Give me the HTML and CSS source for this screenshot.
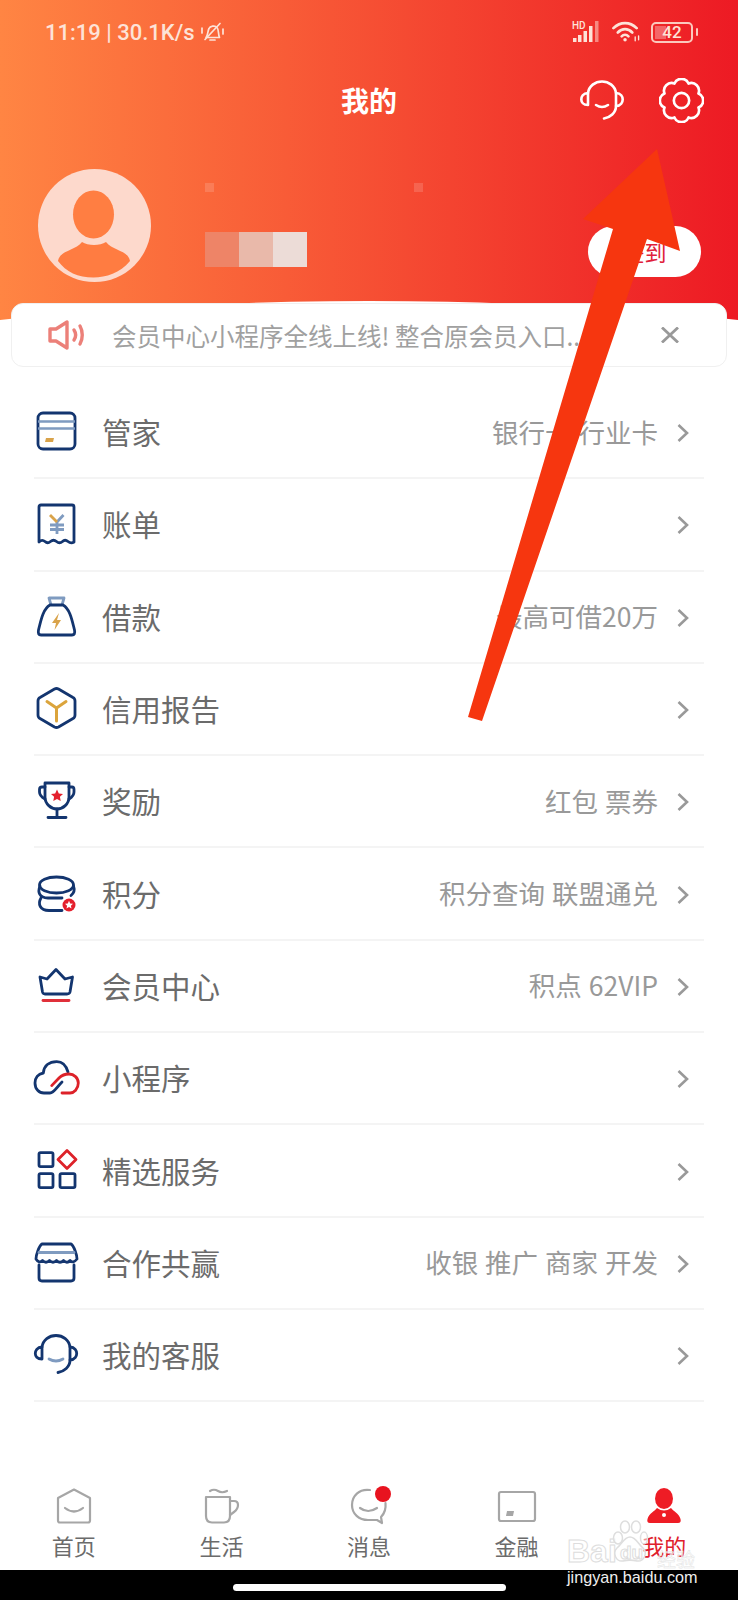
FILE: index.html
```html
<!DOCTYPE html>
<html>
<head>
  <title>我的</title>
  <link rel="stylesheet" href="styles.css">
</head>
<body>
  <div class="header">
    <div class="status-bar">
      <span class="status-text">11:19 | 30.1K/s</span>
      <svg class="bell" width="25" height="20" viewBox="0 0 24 20" fill="none" stroke="currentColor" stroke-width="1.700" stroke-linecap="round" stroke-linejoin="round">
        <path d="M5.500 15.500c2-2 1.500-6 3-9 1-2.500 6-3.500 8-1 2 2 1 7 2.500 10z"/>
        <path d="M9.500 18h5"/>
        <path d="M4.500 17.500 19.500 1.500"/>
        <path d="M1.500 6v5M22.500 7v5"/>
      </svg>
      <div class="status-right">
        <svg width="30" height="22" viewBox="0 0 30 22">
          <text x="0" y="8" class="hd-text">HD</text>
          <rect x="1" y="17" width="3.500" height="4" fill="currentColor"/>
          <rect x="6" y="14" width="3.500" height="7" fill="currentColor"/>
          <rect x="11.500" y="10" width="3.500" height="11" fill="currentColor"/>
          <rect x="17" y="5" width="3.500" height="16" fill="currentColor"/>
          <rect x="23" y="0" width="3.500" height="21" fill="currentColor" opacity="0.5"/>
        </svg>
        <svg width="29" height="22" viewBox="0 0 30 22" fill="none" stroke="currentColor" stroke-width="2.800" stroke-linecap="round">
          <path d="M1.500 7c7-7 17-7 24 0"/>
          <path d="M6 11.500c4.500-4.500 10.500-4.500 15 0"/>
          <path d="M10 15.500c2-2 5-2 7 0"/>
          <circle cx="13.500" cy="19" r="1.800" fill="currentColor" stroke="none"/>
          <path d="M24 16v4M27.500 15v4" stroke-width="1.400"/>
        </svg>
        <div class="battery">
          <div class="battery-body"><span class="battery-fill"></span><span class="battery-num">42</span></div>
          <span class="battery-tip"></span>
        </div>
      </div>
    </div>

    <div class="title-row">
      <div></div>
      <h1>我的</h1>
      <div class="title-icons">
        <svg width="44" height="40" viewBox="0 0 44 40" fill="none" stroke="#fff" stroke-width="2.600" stroke-linecap="round" stroke-linejoin="round">
          <path d="M8 13C9 6 15 1.500 22 1.500S35 6 36 13V26C36 33 30 37.500 24 38.500"/>
          <path d="M8 13C3 13 1.300 17 1.300 19.500S3 25 8 25z"/>
          <path d="M36 13C41 13 42.700 17 42.700 19.500S41 26 36 26"/>
          <path d="M16 25Q22 29 28 25"/>
        </svg>
        <svg width="45" height="45" viewBox="0 0 44 44" fill="none" stroke="#fff" stroke-width="2.600" stroke-linejoin="round">
          <path d="M15.100 5.400A7.500 7.500 0 0 1 28.900 5.400A7.500 7.500 0 0 1 38.600 15.100A7.500 7.500 0 0 1 38.600 28.900A7.500 7.500 0 0 1 28.900 38.600A7.500 7.500 0 0 1 15.100 38.600A7.500 7.500 0 0 1 5.400 28.900A7.500 7.500 0 0 1 5.400 15.100A7.500 7.500 0 0 1 15.100 5.400Z"/>
          <circle cx="22" cy="22" r="7.500"/>
        </svg>
      </div>
    </div>

    <div class="profile">
      <svg class="avatar" width="113" height="113" viewBox="0 0 113 113">
        <circle cx="56.500" cy="56.500" r="56.500" fill="#fdd9cc"/>
        <ellipse cx="55.500" cy="45.500" rx="20.500" ry="24" fill="#ff7e42"/>
        <path d="M20 92C22 81 37 82 44 73C50 77 62 77 68 73C75 82 90 81 92 92C82 104 68 108.500 55.500 108.500C40 108.500 28 103 20 92Z" fill="#ff7c41"/>
      </svg>
      <div class="user-info">
        <div class="name-blur"><span></span><span></span></div>
        <div class="id-blur"><span></span><span></span><span></span></div>
      </div>
      <div class="sign-btn">签到</div>
    </div>
  </div>

  <div class="notice">
    <svg width="38" height="30" viewBox="0 0 38 30" fill="none" stroke="#ec8079" stroke-width="3.400" stroke-linejoin="round" stroke-linecap="round">
      <path d="M2 9H8L19 2V28L8 21H2z"/>
      <path d="M26 10c2 3 2 7 0 10"/>
      <path d="M32 6c3 5 3 13 0 18"/>
    </svg>
    <div class="notice-text">会员中心小程序全线上线! 整合原会员入口...</div>
    <svg class="notice-close" width="18" height="16" viewBox="0 0 18 16" fill="none" stroke="#999" stroke-width="2.800">
      <path d="M1 0.500 17 15.500M17 0.500 1 15.500"/>
    </svg>
  </div>

  <div class="menu">
    <div class="menu-row">
      <svg class="menu-icon" viewBox="0 0 44 44" fill="none" stroke="#13356f" stroke-width="2.800">
        <rect x="4" y="4" width="37" height="36" rx="5"/>
        <path d="M4 12.500H41M4 19.500H41" stroke="#7f9bc0" stroke-width="2.500"/>
        <path d="M12 29H20L19 33H11z" fill="#d9a34a" stroke="none"/>
      </svg>
      <span class="menu-title">管家</span>
      <span class="menu-info">银行卡 行业卡</span>
      <svg class="chevron" width="12" height="18" viewBox="0 0 12 18"><path d="M1.500 1 10 9 1.500 17"/></svg>
    </div>
    <div class="menu-row">
      <svg class="menu-icon" viewBox="0 0 44 44" fill="none" stroke="#13356f" stroke-width="2.800" stroke-linejoin="round">
        <path d="M5 41V6Q5 4 7 4H38Q40 4 40 6V41Q37 43 34 40.500Q31 38 28.500 40.500Q25.500 43 22.500 40.500Q19.500 38 16.500 40.500Q13.500 43 11 40.500Q8 38 5 41Z"/>
        <path d="M29.500 14 23 21V33M16 24H30M16 28.500H30" stroke="#7f9bc0"/>
        <path d="M16 14 23 21" stroke="#d9a34a"/>
      </svg>
      <span class="menu-title">账单</span>
      <svg class="chevron" width="12" height="18" viewBox="0 0 12 18"><path d="M1.500 1 10 9 1.500 17"/></svg>
    </div>
    <div class="menu-row">
      <svg class="menu-icon" viewBox="0 0 44 44" fill="none" stroke="#13356f" stroke-width="2.800" stroke-linejoin="round">
        <path d="M17 11 15 4H30L28 11" stroke="#7f9bc0"/>
        <path d="M16 11H29C36 15 38 26 40.500 36Q41.500 41 38 41H7Q3.500 41 4.500 36C7 26 9 15 16 11Z"/>
        <path d="M25 19 18 29H22L20.500 36 27 26H23z" fill="#d9a34a" stroke="none"/>
      </svg>
      <span class="menu-title">借款</span>
      <span class="menu-info">最高可借20万</span>
      <svg class="chevron" width="12" height="18" viewBox="0 0 12 18"><path d="M1.500 1 10 9 1.500 17"/></svg>
    </div>
    <div class="menu-row">
      <svg class="menu-icon" viewBox="0 0 44 44" fill="none" stroke="#13356f" stroke-width="2.800" stroke-linejoin="round">
        <path d="M20.500 3Q22.500 2 24.500 3L39 11.500Q41 12.500 41 15V29Q41 31.500 39 32.500L24.500 41Q22.500 42 20.500 41L6 32.500Q4 31.500 4 29V15Q4 12.500 6 11.500Z"/>
        <path d="M13 15.500 22.500 22 32 15.500M22.500 22V35" stroke="#dba43c" stroke-linecap="round" stroke-width="3"/>
      </svg>
      <span class="menu-title">信用报告</span>
      <svg class="chevron" width="12" height="18" viewBox="0 0 12 18"><path d="M1.500 1 10 9 1.500 17"/></svg>
    </div>
    <div class="menu-row">
      <svg class="menu-icon" viewBox="0 0 44 44" fill="none" stroke="#13356f" stroke-width="2.800" stroke-linejoin="round" stroke-linecap="round">
        <path d="M11 5H35V19C35 26 29 31 23 31S11 26 11 19Z"/>
        <path d="M11 9H8Q5.500 9 5.500 11.500V14Q5.500 18 11 21M35 9H38Q40 9 40 11.500V14Q40 18 35 21"/>
        <path d="M23 31V39M14 39.500H32"/>
        <path d="M23 11.500 24.800 15.500 29 16 25.900 18.800 26.700 23 23 20.900 19.300 23 20.100 18.800 17 16 21.200 15.500Z" fill="#e4202d" stroke="none"/>
      </svg>
      <span class="menu-title">奖励</span>
      <span class="menu-info">红包 票券</span>
      <svg class="chevron" width="12" height="18" viewBox="0 0 12 18"><path d="M1.500 1 10 9 1.500 17"/></svg>
    </div>
    <div class="menu-row">
      <svg class="menu-icon" viewBox="0 0 44 44" fill="none" stroke="#13356f" stroke-width="2.800" stroke-linecap="round">
        <ellipse cx="22.500" cy="14" rx="17" ry="8"/>
        <path d="M6 15C3.500 21 5 26.500 14 27H28"/>
        <path d="M39.500 15C41 19 40 22 37 24.500"/>
        <path d="M7 27C3.500 33 6 39.500 15 39.500H28"/>
        <circle cx="35" cy="34" r="6.500" fill="#e4202d" stroke="none"/>
        <path d="M35 29.800 36.200 32.500 39 32.800 36.900 34.700 37.500 37.500 35 36 32.500 37.500 33.100 34.700 31 32.800 33.800 32.500Z" fill="#fff" stroke="none"/>
      </svg>
      <span class="menu-title">积分</span>
      <span class="menu-info">积分查询 联盟通兑</span>
      <svg class="chevron" width="12" height="18" viewBox="0 0 12 18"><path d="M1.500 1 10 9 1.500 17"/></svg>
    </div>
    <div class="menu-row">
      <svg class="menu-icon" viewBox="0 0 44 44" fill="none" stroke="#13356f" stroke-width="2.800" stroke-linejoin="round" stroke-linecap="round">
        <path d="M6 14 13 16 22 6.500 31 16 38.500 14 36 29Q35.500 31 33 31H11Q9 31 8.500 29Z"/>
        <path d="M9 37.500H35" stroke="#e0303a"/>
      </svg>
      <span class="menu-title">会员中心</span>
      <span class="menu-info">积点 62VIP</span>
      <svg class="chevron" width="12" height="18" viewBox="0 0 12 18"><path d="M1.500 1 10 9 1.500 17"/></svg>
    </div>
    <div class="menu-row">
      <svg class="menu-icon" viewBox="0 0 44 44" fill="none" stroke="#13356f" stroke-width="2.800" stroke-linecap="round" stroke-linejoin="round">
        <path d="M34 17C32 10 28 6.600 22.700 6.600C15 6.600 10 11 9.300 18C4 19 1 23 1 28C1 34 5 38 10 38H16C20 38 22 33 28 27"/>
        <path d="M17.700 30.600 25 23C28 20 31 19 35 19C40 19 44.300 23 44.300 28C44.300 34 40 38 36 38H28" stroke="#dd2229"/>
      </svg>
      <span class="menu-title">小程序</span>
      <svg class="chevron" width="12" height="18" viewBox="0 0 12 18"><path d="M1.500 1 10 9 1.500 17"/></svg>
    </div>
    <div class="menu-row">
      <svg class="menu-icon" viewBox="0 0 44 44" fill="none" stroke="#13356f" stroke-width="2.800" stroke-linejoin="round">
        <rect x="5" y="4.600" width="14" height="14" rx="1.500"/>
        <rect x="5" y="25.600" width="14" height="14" rx="1.500"/>
        <rect x="26" y="25.600" width="15" height="14" rx="1.500"/>
        <path d="M33 2.500 42 11.500 33 20.500 24 11.500Z" stroke="#dd2229"/>
      </svg>
      <span class="menu-title">精选服务</span>
      <svg class="chevron" width="12" height="18" viewBox="0 0 12 18"><path d="M1.500 1 10 9 1.500 17"/></svg>
    </div>
    <div class="menu-row">
      <svg class="menu-icon" viewBox="0 0 44 44" fill="none" stroke="#13356f" stroke-width="2.800" stroke-linejoin="round" stroke-linecap="round">
        <path d="M8 4H37C40 6 43 15 43 19Q39 24 36 20.500Q33 24 29.500 20.500Q26 24 22.500 20.500Q19 24 15.500 20.500Q12 24 8.500 20.500Q5 24 2 19C2 15 5 6 8 4Z"/>
        <path d="M5 12.500H40" stroke="#7f9bc0"/>
        <path d="M5 25V38Q5 41 8 41H37Q40 41 40 38V25"/>
      </svg>
      <span class="menu-title">合作共赢</span>
      <span class="menu-info">收银 推广 商家 开发</span>
      <svg class="chevron" width="12" height="18" viewBox="0 0 12 18"><path d="M1.500 1 10 9 1.500 17"/></svg>
    </div>
    <div class="menu-row">
      <svg class="menu-icon" viewBox="0 0 44 44" fill="none" stroke="#13356f" stroke-width="2.800" stroke-linecap="round" stroke-linejoin="round">
        <path d="M8 15C9 8 15 3.500 22 3.500S35 8 36 15V28C36 35 30 39.500 24 40.500"/>
        <path d="M8 15C3 15 1.300 19 1.300 21.500S3 27 8 27z"/>
        <path d="M36 15C41 15 42.700 19 42.700 21.500S41 28 36 28"/>
        <path d="M15 27Q22 31 29 27" stroke="#7f9bc0"/>
      </svg>
      <span class="menu-title">我的客服</span>
      <svg class="chevron" width="12" height="18" viewBox="0 0 12 18"><path d="M1.500 1 10 9 1.500 17"/></svg>
    </div>
  </div>

  <div class="tab-bar">
    <div class="tab">
      <svg width="38" height="36" viewBox="0 0 38 36" fill="none" stroke="#a6a6a6" stroke-width="2.200" stroke-linejoin="round" stroke-linecap="round">
        <path d="M3 10 19 1.500 35 10V32.500Q35 34.500 33 34.500H5Q3 34.500 3 32.500Z"/>
        <path d="M10 20Q19 27 28 20"/>
      </svg>
      <span>首页</span>
    </div>
    <div class="tab">
      <svg width="38" height="36" viewBox="0 0 38 36" fill="none" stroke="#a6a6a6" stroke-width="2.200" stroke-linejoin="round" stroke-linecap="round">
        <path d="M4 9H28V28Q28 34.500 22 34.500H10Q4 34.500 4 28Z"/>
        <path d="M28 13H32Q36 13 36 17T32 24L28 27"/>
        <path d="M8 3Q12 0.500 16 3T25 3"/>
      </svg>
      <span>生活</span>
    </div>
    <div class="tab">
      <svg width="38" height="36" viewBox="0 0 38 36" fill="none" stroke="#a6a6a6" stroke-width="2.200" stroke-linejoin="round" stroke-linecap="round">
        <path d="M20 2C9 0.500 2 8 2 17S9 32 18 32H27L32 35 31 29C35 25 36 20 35.500 15"/>
        <path d="M10 20Q18 26 27 20"/>
        <circle cx="33" cy="6" r="8" fill="#e8131f" stroke="none"/>
      </svg>
      <span>消息</span>
    </div>
    <div class="tab">
      <svg width="38" height="36" viewBox="0 0 38 36" fill="none" stroke="#a6a6a6" stroke-width="2.200" stroke-linejoin="round">
        <rect x="1" y="4" width="36" height="29" rx="2"/>
        <path d="M9 23H16L15 28H8Z" fill="#a6a6a6" stroke="none"/>
      </svg>
      <span>金融</span>
    </div>
    <div class="tab tab-active">
      <svg width="38" height="36" viewBox="0 0 38 36">
        <ellipse cx="19" cy="10.500" rx="9" ry="10.500" fill="#ee1c25"/>
        <path d="M12 20C10 23 4 25 2.500 31Q1.500 35 5 35H33Q36.500 35 35.500 31C34 25 28 23 26 20Q19 25 12 20Z" fill="#ee1c25"/>
        <circle cx="19" cy="27" r="2" fill="#fff"/>
      </svg>
      <span>我的</span>
    </div>
  </div>

  <div class="home-bar"><span></span></div>

  <div class="watermark">
    <div class="wm-logo">
      <span class="wm-bai">Bai</span>
      <svg class="wm-paw" width="38" height="46" viewBox="0 0 38 46" fill="rgba(255,255,255,0.5)" stroke="#dedede" stroke-width="1.500">
        <ellipse cx="7" cy="18" rx="4.500" ry="6"/>
        <ellipse cx="14" cy="7" rx="4.500" ry="6"/>
        <ellipse cx="25" cy="7" rx="4.500" ry="6"/>
        <ellipse cx="33" cy="18" rx="3.500" ry="6"/>
        <path d="M19 17C25 17 27 24 32 28C37 33 33 42 26 41C22 40 16 40 12 41C5 42 1 33 6 28C11 24 13 17 19 17Z"/>
      </svg>
      <span class="wm-du">du</span>
      <span class="wm-jy">经验</span>
    </div>
    <div class="wm-url">jingyan.baidu.com</div>
  </div>

  <svg class="arrow" width="738" height="1600" viewBox="0 0 738 1600">
    <polygon points="657,149 680,251 647,239 482,721 468,717 613,229 583,219" fill="#f6360f"/>
  </svg>
</body>
</html>
```

FILE: styles.css
```css
body {
  position: relative;
  width: 738px;
  height: 1600px;
  margin: 0;
  overflow: hidden;
  display: flex;
  flex-direction: column;
  background-color: #ffffff;
  font-family: "Noto Sans CJK SC", "Noto Sans", sans-serif;
}

/* header */
.header {
  position: relative;
  height: 322px;
  flex-shrink: 0;
  overflow: hidden;
  background: linear-gradient(90deg, #ff8543, #ed1a24);
  color: #ffffff;
}

.header::after {
  content: "";
  position: absolute;
  left: -431px;
  top: 301px;
  width: 1600px;
  height: 336px;
  border-radius: 50%;
  background-color: #ffffff;
}

.status-bar {
  display: flex;
  align-items: center;
  height: 24px;
  padding: 20px 40px 0 45px;
  color: #fde3d8;
}

.status-text {
  font-family: Roboto, sans-serif;
  font-size: 22px;
  font-weight: 500;
}

.bell {
  margin-left: 5px;
}

.status-right {
  display: flex;
  align-items: center;
  gap: 10px;
  margin-left: auto;
}

.hd-text {
  font-family: Roboto, sans-serif;
  font-size: 10px;
  font-weight: 500;
  fill: currentColor;
}

.battery {
  display: flex;
  align-items: center;
  gap: 3px;
}

.battery-body {
  position: relative;
  width: 42px;
  height: 21px;
  box-sizing: border-box;
  display: flex;
  align-items: center;
  justify-content: center;
  border: 2px solid #fbc9bd;
  border-radius: 5px;
}

.battery-fill {
  position: absolute;
  left: 2px;
  top: 2px;
  bottom: 2px;
  width: 11px;
  background-color: rgba(255, 255, 255, 0.3);
}

.battery-num {
  position: relative;
  font-family: Roboto, sans-serif;
  font-size: 17px;
  font-weight: 500;
  line-height: 17px;
}

.battery-tip {
  width: 2px;
  height: 8px;
  border-radius: 1px;
  background-color: #fbc9bd;
}

.title-row {
  display: grid;
  grid-template-columns: 1fr auto 1fr;
  align-items: center;
  height: 46px;
  margin-top: 33px;
  padding-right: 34px;
  padding-left: 34px;
}

h1 {
  margin: 0;
  font-size: 28px;
  font-weight: 700;
  line-height: 46px;
}

.title-icons {
  display: flex;
  align-items: center;
  justify-content: flex-end;
  gap: 35px;
}

.profile {
  display: flex;
  height: 113px;
  margin-top: 46px;
  padding: 0 37px 0 38px;
}

.user-info {
  display: flex;
  flex-direction: column;
  gap: 40px;
  margin-top: 14px;
  margin-left: 54px;
}

.name-blur {
  display: flex;
  justify-content: space-between;
  width: 218px;
  height: 9px;
}

.name-blur span {
  width: 9px;
  background-color: rgba(255, 255, 255, 0.15);
}

.id-blur {
  display: flex;
  width: 102px;
  height: 35px;
}

.id-blur span {
  flex: 1;
  background-color: #ee8467;
}

.id-blur span:nth-child(2) {
  background-color: #e9b9aa;
}

.id-blur span:nth-child(3) {
  background-color: #ecdcd7;
}

.sign-btn {
  width: 113px;
  height: 51px;
  margin-top: 57px;
  margin-left: auto;
  border-radius: 26px;
  background-color: #ffffff;
  color: #e0203a;
  font-size: 22px;
  line-height: 51px;
  text-align: center;
}

/* notice */
.notice {
  position: relative;
  display: flex;
  align-items: center;
  gap: 26px;
  height: 64px;
  box-sizing: border-box;
  flex-shrink: 0;
  margin: -19px 11px 0;
  padding: 0 47px 0 36px;
  background-color: #ffffff;
  border: 1px solid #f0f0f0;
  border-radius: 12px;
}

.notice-text {
  flex: 1;
  overflow: hidden;
  color: #a0a0a0;
  font-size: 24.5px;
  white-space: nowrap;
}

.notice-close {
  flex-shrink: 0;
}

/* menu */
.menu {
  margin: 20px 34px 0;
}

.menu-row {
  display: flex;
  align-items: center;
  height: 92.3px;
  box-sizing: border-box;
  border-bottom: 2px solid #f4f4f4;
}

.menu-icon {
  width: 44px;
  height: 44px;
  flex-shrink: 0;
  margin-bottom: 2px;
  overflow: visible;
}

.menu-title {
  margin-bottom: 2px;
  margin-left: 24px;
  color: #6b6b6b;
  font-size: 29.5px;
}

.menu-info {
  margin-bottom: 2px;
  margin-left: auto;
  color: #999999;
  font-size: 26.5px;
  word-spacing: 1px;
}

.chevron {
  flex-shrink: 0;
  margin-top: 2px;
  margin-right: 15px;
  margin-left: 19px;
  fill: none;
  stroke: #999999;
  stroke-width: 2.6;
}

.menu-title + .chevron {
  margin-left: auto;
}

/* tab bar */
.tab-bar {
  display: flex;
  margin-top: auto;
  height: 82px;
}

.tab {
  flex: 1;
  display: flex;
  flex-direction: column;
  align-items: center;
  color: #6b6b6b;
  font-size: 22px;
  line-height: 32px;
}

.tab svg {
  margin-bottom: 5px;
  overflow: visible;
}

.tab-active {
  color: #e0202c;
}

.home-bar {
  display: flex;
  align-items: center;
  justify-content: center;
  flex-shrink: 0;
  height: 30px;
  background-color: #000000;
}

.home-bar span {
  width: 273px;
  height: 7px;
  margin-top: 5px;
  border-radius: 4px;
  background-color: #ffffff;
}

/* watermark and arrow lie over the page */
.watermark {
  position: absolute;
  left: 567px;
  top: 1520px;
  width: 140px;
  font-family: "Liberation Sans", sans-serif;
}

.wm-logo {
  position: relative;
  height: 47px;
}

.wm-bai,
.wm-du,
.wm-jy {
  position: absolute;
  color: rgba(255, 255, 255, 0.6);
  -webkit-text-stroke: 1px #dddddd;
  font-weight: 700;
}

.wm-bai {
  left: 0;
  top: 13px;
  font-size: 32px;
}

.wm-paw {
  position: absolute;
  left: 44px;
  top: 0;
}

.wm-du {
  left: 53px;
  top: 22px;
  font-size: 19px;
}

.wm-jy {
  left: 90px;
  top: 25px;
  font-family: "Noto Sans CJK SC", sans-serif;
  font-size: 19px;
  font-weight: 400;
  -webkit-text-stroke: 0.5px #e4e4e4;
}

.wm-url {
  color: #eeeeee;
  font-size: 16.2px;
  line-height: 20px;
}

.arrow {
  position: absolute;
  left: 0;
  top: 0;
  pointer-events: none;
}
```
